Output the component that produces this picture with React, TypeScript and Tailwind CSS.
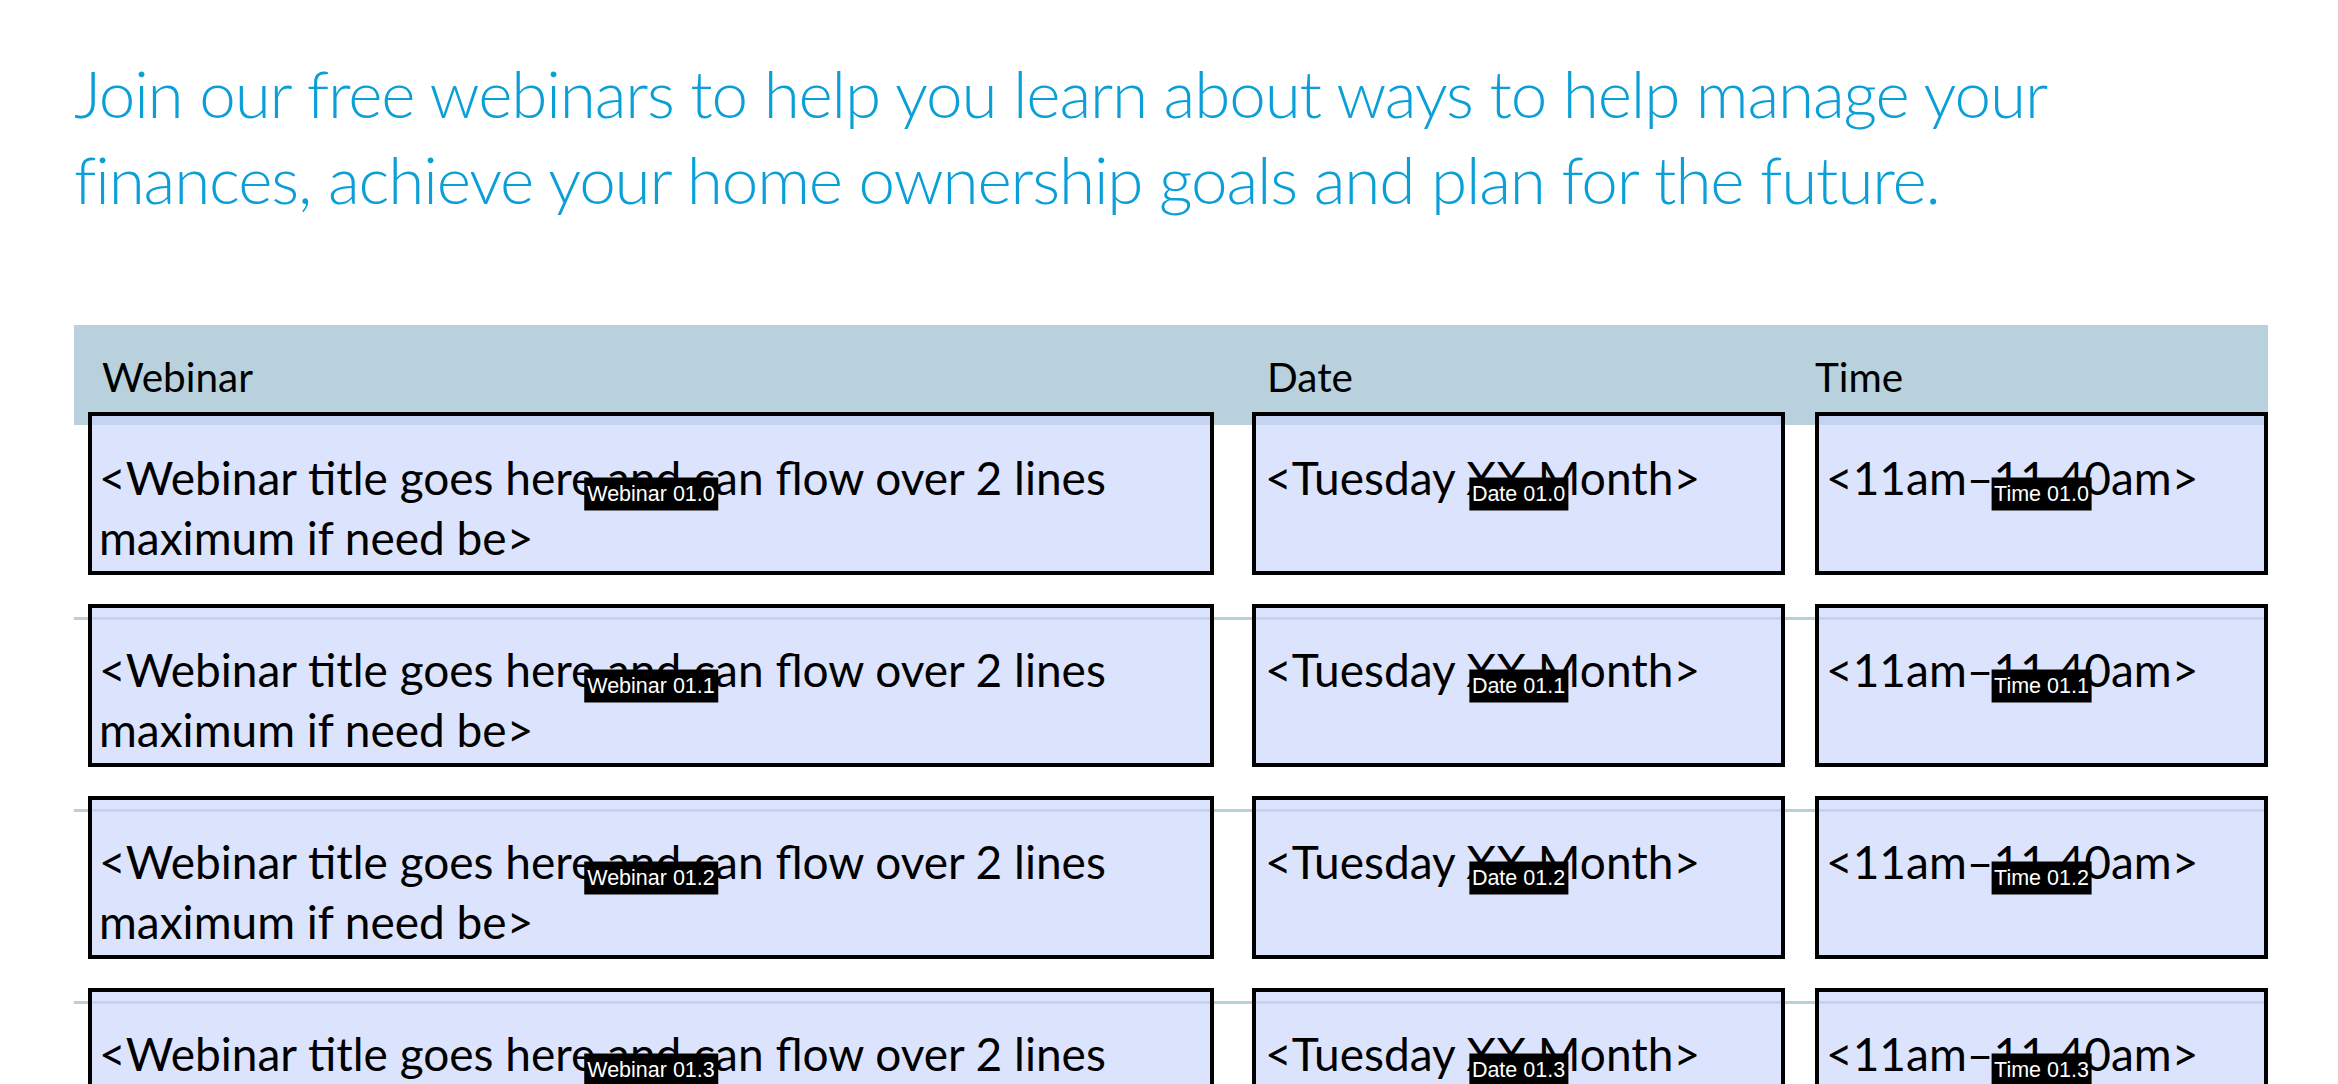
import React from 'react';

const rows = [0, 1, 2, 3];

const Label: React.FC<{ text: string }> = ({ text }) => (
  <span className="absolute left-1/2 top-1/2 -translate-x-1/2 -translate-y-1/2 whitespace-nowrap bg-black px-[3px] font-['Liberation_Sans',Arial,sans-serif] text-[21.5px] leading-[33px] text-white">
    {text}
  </span>
);

export default function App() {
  return (
    <div className="min-h-screen bg-white font-['Lato','Liberation_Sans',sans-serif] text-black">
      <div className="pl-[74px] pr-[70px]">
        <h1 className="pt-[50px] text-[65.6px] font-light leading-[86px] tracking-[-1.15px] text-[#0b9fd8]">
          Join our free webinars to help you learn about ways to help manage your
          <br />
          finances, achieve your home ownership goals and plan for the future.
        </h1>

        <div className="mt-[103px]">
          {/* header */}
          <div className="flex h-[100px] bg-[#b8d1dc] pt-[28px] text-[40.5px] leading-[48px]">
            <div className="w-[1178px] pl-[28px]">Webinar</div>
            <div className="w-[563px] pl-[15px]">Date</div>
            <div>Time</div>
          </div>

          {rows.map((i) => (
            <div
              key={i}
              className={`flex h-[192px] items-start border-t-[3px] pl-[14px] text-[46px] leading-[60px] ${
                i === 0 ? 'border-transparent' : 'border-[#b8d0dc]'
              }`}
            >
              <div className="relative -mt-[16px] h-[163px] w-[1126px] border-[4px] border-black bg-[rgba(202,213,250,0.66)] pl-[7px] pt-[32px]">
                &lt;Webinar title goes here and can flow over 2 lines maximum if need be&gt;
                <Label text={`Webinar 01.${i}`} />
              </div>
              <div className="relative -mt-[16px] ml-[38px] h-[163px] w-[533px] border-[4px] border-black bg-[rgba(202,213,250,0.66)] pl-[9px] pt-[32px]">
                &lt;Tuesday XX Month&gt;
                <Label text={`Date 01.${i}`} />
              </div>
              <div className="relative -mt-[16px] ml-[30px] h-[163px] w-[453px] border-[4px] border-black bg-[rgba(202,213,250,0.66)] pl-[7px] pt-[32px]">
                &lt;11am–11.40am&gt;
                <Label text={`Time 01.${i}`} />
              </div>
            </div>
          ))}
        </div>
      </div>
    </div>
  );
}
